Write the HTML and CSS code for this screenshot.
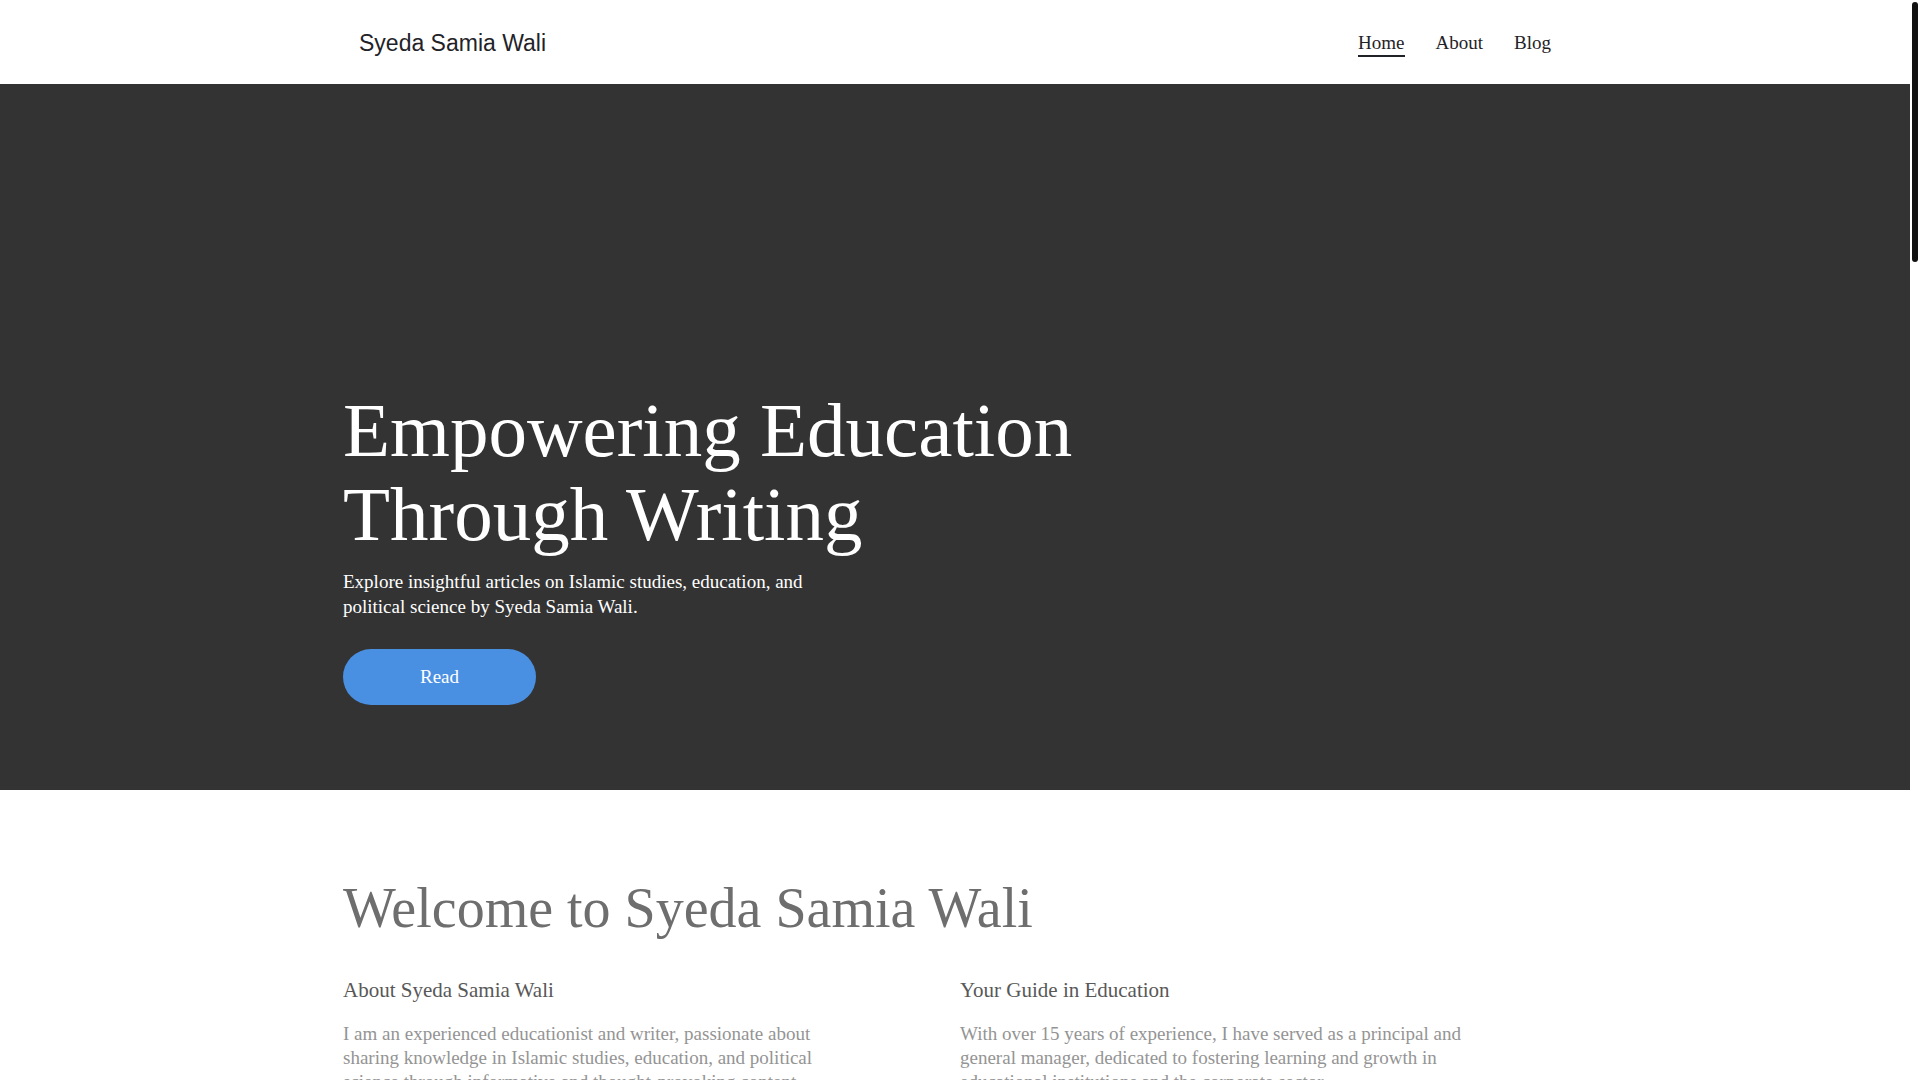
FILE: index.html
```html
<!DOCTYPE html>
<html lang="en">
  <head>
    <meta charset="UTF-8" />
    <meta name="viewport" content="width=device-width, initial-scale=1.0" />
    <title>Syeda Samia Wali</title>
    <link rel="stylesheet" href="styles.css">
  </head>
  <body>
    <div class="scroll-thumb" aria-hidden="true"></div>

    <header class="site-header">
      <div class="container header-inner">
        <a class="logo" href="#">Syeda Samia Wali</a>
        <nav class="main-nav">
          <a href="#" class="active">Home</a>
          <a href="#">About</a>
          <a href="#">Blog</a>
        </nav>
      </div>
    </header>

    <section class="hero">
      <div class="container">
        <h1 class="hero-title">Empowering Education<br>Through Writing</h1>
        <p class="hero-text">Explore insightful articles on Islamic studies, education, and political science by Syeda Samia Wali.</p>
        <a href="#" class="btn-read">Read</a>
      </div>
    </section>

    <section class="welcome">
      <div class="container">
        <h2 class="section-title">Welcome to Syeda Samia Wali</h2>
        <div class="columns">
          <div class="column">
            <h3>About Syeda Samia Wali</h3>
            <p>I am an experienced educationist and writer, passionate about sharing knowledge in Islamic studies, education, and political science through informative and thought-provoking content.</p>
          </div>
          <div class="column">
            <h3>Your Guide in Education</h3>
            <p>With over 15 years of experience, I have served as a principal and general manager, dedicated to fostering learning and growth in educational institutions and the corporate sector.</p>
          </div>
        </div>
      </div>
    </section>

    <section class="articles">
      <div class="container">
        <h2 class="section-title">Latest Articles</h2>
        <div class="columns">
          <div class="column">
            <h3>Islamic Studies</h3>
            <p>Reflections on faith, history and the lessons they hold for students and teachers today.</p>
          </div>
          <div class="column">
            <h3>Political Science</h3>
            <p>Clear and balanced writing on governance, society and the ideas that shape our world.</p>
          </div>
        </div>
      </div>
    </section>

    <footer class="site-footer">
      <div class="container">
        <p>&copy; Syeda Samia Wali</p>
      </div>
    </footer>
  </body>
</html>
```

FILE: styles.css
```css
html {
  background: #fff;
}
body {
  margin: 0;
  padding-right: 10px; /* room for the thin scrollbar */
  font-family: 'Liberation Serif', 'Times New Roman', serif;
  color: #1f2328;
  background: #fff;
}
.scroll-thumb {
  position: fixed;
  top: 2px;
  right: 2px;
  width: 6px;
  height: 260px;
  border-radius: 3px;
  background: #111;
  z-index: 10;
}
a {
  color: inherit;
  text-decoration: none;
}
.container {
  max-width: 1224px;
  margin: 0 auto;
}

/* header */
.site-header {
  background: #fff;
}
.header-inner {
  display: flex;
  align-items: center;
  justify-content: space-between;
  height: 84px;
  padding: 2px 16px 0;
  box-sizing: border-box;
}
.logo {
  font-family: 'Liberation Sans', Arial, sans-serif;
  font-size: 23px;
  color: #1f2328;
}
.main-nav {
  display: flex;
  gap: 31px;
  padding-top: 2px;
}
.main-nav a {
  font-size: 19px;
  color: #1f2328;
  border-bottom: 2px solid transparent;
  padding-bottom: 1px;
}
.main-nav a.active {
  border-bottom-color: #1f2328;
}

/* hero */
.hero {
  background: #333;
  padding: 304px 0 85px;
}
.hero-title {
  margin: 0;
  font-size: 77px;
  line-height: 84px;
  font-weight: normal;
  color: #fff;
}
.hero-text {
  margin: 14px 0 0;
  max-width: 490px;
  font-size: 19px;
  line-height: 24.5px;
  color: #fff;
}
.btn-read {
  display: inline-flex;
  align-items: center;
  justify-content: center;
  margin-top: 30px;
  width: 193px;
  height: 56px;
  border-radius: 28px;
  background: #4a90e2;
  color: #fff;
  font-size: 19px;
}

/* sections */
.welcome {
  padding: 85px 0 120px;
}
.section-title {
  margin: 0;
  font-size: 56px;
  line-height: 66px;
  font-weight: normal;
  color: #6e6e6e;
}
.columns {
  display: grid;
  grid-template-columns: 1fr 1fr;
  gap: 10px;
  margin-top: 36px;
}
.column h3 {
  margin: 0;
  font-size: 21px;
  line-height: 27px;
  font-weight: normal;
  color: #585858;
}
.column p {
  margin: 18px 0 0;
  max-width: 512px;
  font-size: 19px;
  line-height: 24px;
  color: #949494;
}
.articles {
  padding: 80px 0 200px;
}
.site-footer {
  background: #333;
  color: #ccc;
  padding: 30px 0;
  font-size: 16px;
}
```
